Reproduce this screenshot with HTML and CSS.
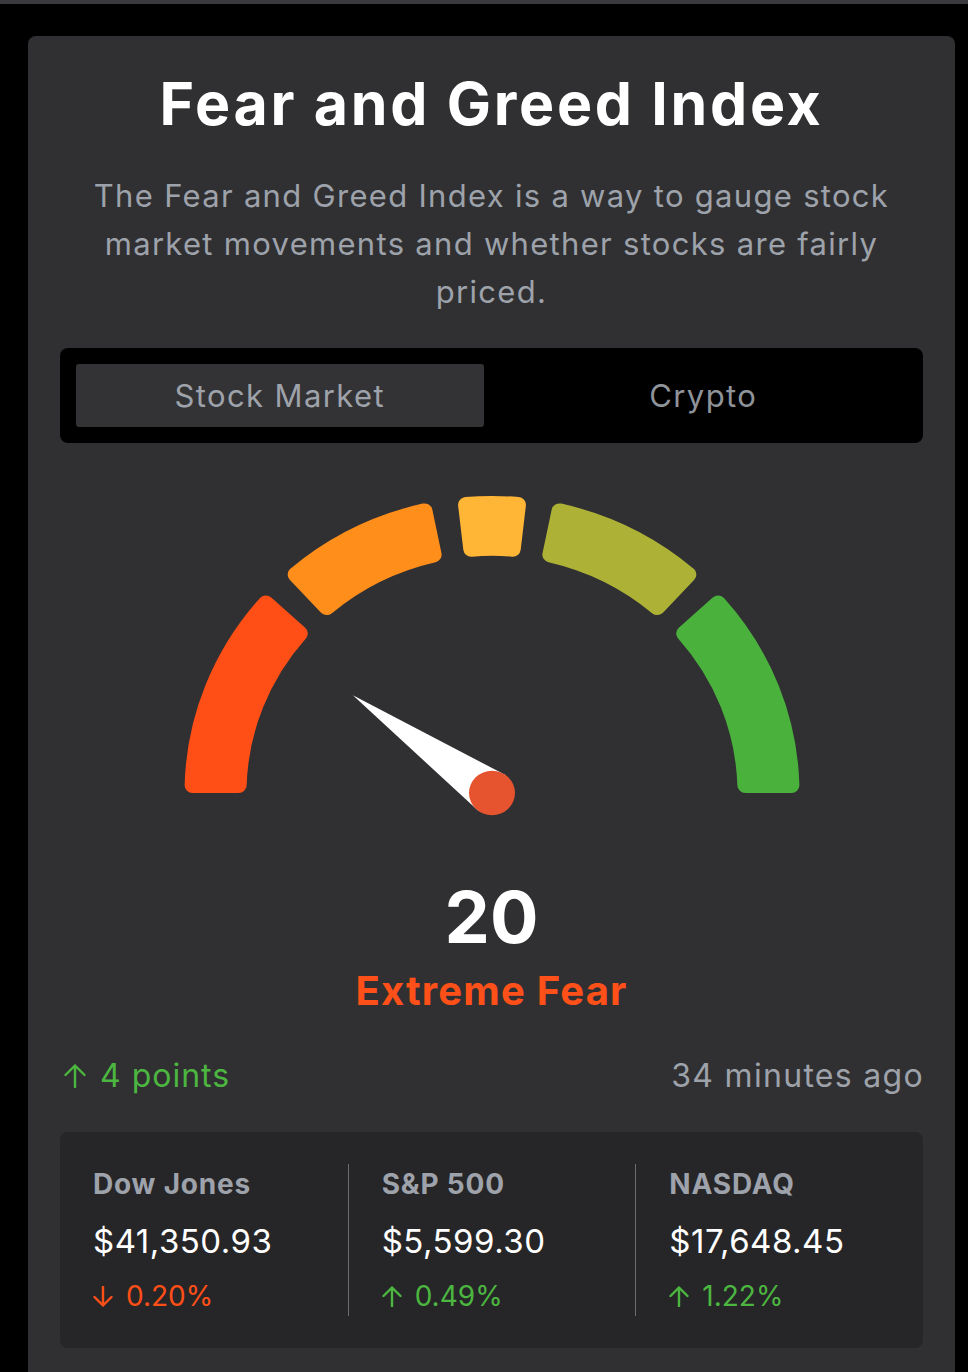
FILE: index.html
```html
<!DOCTYPE html>
<html lang="en">
<head>
<meta charset="utf-8">
<title>Fear and Greed Index</title>
<link rel="stylesheet" href="styles.css">
</head>
<body>
<div class="topbar"></div>
<main class="card">
  <h1 class="title">Fear and Greed Index</h1>
  <p class="desc">The Fear and Greed Index is a way to gauge stock market movements and whether stocks are fairly priced.</p>
  <div class="tabs">
    <div class="tab tab-active">Stock Market</div>
    <div class="tab tab-idle">Crypto</div>
  </div>
  <svg class="gauge" width="640" height="363" viewBox="-320 -333 640 363" xmlns="http://www.w3.org/2000/svg">
    <g transform="scale(1 0.966)" stroke-width="16" stroke-linejoin="round">
      <path fill="#ff4f17" stroke="#ff4f17" d="M -299.39 -8 A 299.5 299.5 0 0 1 -226.14 -196.37 L -192.21 -165.28 A 253.5 253.5 0 0 0 -253.37 -8 Z"/>
      <path fill="#ff8e1b" stroke="#ff8e1b" d="M -196.37 -226.14 A 299.5 299.5 0 0 1 -67.53 -291.79 L -58.35 -246.70 A 253.5 253.5 0 0 0 -165.28 -192.21 Z"/>
      <path fill="#ffb636" stroke="#ffb636" d="M -25.94 -298.37 A 299.5 299.5 0 0 1 25.94 -298.37 L 20.74 -252.65 A 253.5 253.5 0 0 0 -20.74 -252.65 Z"/>
      <path fill="#adb236" stroke="#adb236" d="M 196.37 -226.14 A 299.5 299.5 0 0 0 67.53 -291.79 L 58.35 -246.70 A 253.5 253.5 0 0 1 165.28 -192.21 Z"/>
      <path fill="#4ab13d" stroke="#4ab13d" d="M 299.39 -8 A 299.5 299.5 0 0 0 226.14 -196.37 L 192.21 -165.28 A 253.5 253.5 0 0 1 253.37 -8 Z"/>
      <path fill="#ffffff" stroke="none" d="M -139.1 -101.1 L 13.5 -18.6 L -13.5 18.6 Z"/>
      <circle cx="0" cy="0" r="23" fill="#e5532f"/>
    </g>
  </svg>
  <div class="value">20</div>
  <div class="label">Extreme Fear</div>
  <div class="meta">
    <span class="delta up">
      <svg class="arrow" width="22" height="24" viewBox="0 0 22 24"><path d="M11 23 V1.5 M1.5 11 L11 1.5 L20.5 11"/></svg>
      4 points
    </span>
    <span class="time">34 minutes ago</span>
  </div>
  <div class="stats">
    <div class="stat">
      <div class="name">Dow Jones</div>
      <div class="price">$41,350.93</div>
      <div class="chg down">
        <svg class="arrow" width="20" height="21" viewBox="0 0 20 21"><path d="M10 0.5 V19.5 M1.5 11 L10 19.5 L18.5 11"/></svg>
        0.20%
      </div>
    </div>
    <div class="stat">
      <div class="name">S&amp;P 500</div>
      <div class="price">$5,599.30</div>
      <div class="chg up">
        <svg class="arrow" width="20" height="21" viewBox="0 0 20 21"><path d="M10 20.5 V1.5 M1.5 10 L10 1.5 L18.5 10"/></svg>
        0.49%
      </div>
    </div>
    <div class="stat">
      <div class="name">NASDAQ</div>
      <div class="price">$17,648.45</div>
      <div class="chg up">
        <svg class="arrow" width="20" height="21" viewBox="0 0 20 21"><path d="M10 20.5 V1.5 M1.5 10 L10 1.5 L18.5 10"/></svg>
        1.22%
      </div>
    </div>
  </div>
</main>
</body>
</html>
```
FILE: styles.css
```css
* {
  box-sizing: border-box;
}

html, body {
  margin: 0;
  padding: 0;
  background: #000000;
}

body {
  font-family: Inter, "Noto Sans", "DejaVu Sans", sans-serif;
  color: #ffffff;
  overflow: hidden;
}

.topbar {
  height: 4px;
  background: #3a3a3c;
}

.card {
  margin: 32px 13px 0 28px;
  width: 927px;
  background: #303032;
  border-radius: 8px;
  padding: 32px 32px 40px;
}

.title {
  margin: 0;
  font-size: 59px;
  line-height: 72px;
  font-weight: 700;
  letter-spacing: 2.7px;
  text-align: center;
  color: #ffffff;
}

.desc {
  margin: 32px 0 0;
  font-size: 31px;
  line-height: 48px;
  font-weight: 400;
  letter-spacing: 1.3px;
  text-align: center;
  color: #9da2ab;
}

.tabs {
  margin-top: 32px;
  background: #000000;
  border-radius: 8px;
  padding: 16px;
  display: grid;
  grid-template-columns: 1fr 1fr;
  gap: 16px;
}

.tab {
  height: 63px;
  display: flex;
  align-items: center;
  justify-content: center;
  font-size: 31px;
  letter-spacing: 1.4px;
  color: #9ea2aa;
  border-radius: 3px;
}

.tab-active {
  background: #333335;
}

.tab-idle {
  color: #8f939a;
}

.gauge {
  display: block;
  margin: 17px auto 0;
}

.value {
  margin-top: 58px;
  font-size: 72px;
  line-height: 72px;
  font-weight: 700;
  text-align: center;
  color: #ffffff;
}

.label {
  margin-top: 14px;
  font-size: 40px;
  line-height: 48px;
  font-weight: 700;
  letter-spacing: 1.2px;
  text-align: center;
  color: #ff5019;
}

.meta {
  margin-top: 41px;
  display: flex;
  justify-content: space-between;
  align-items: center;
  font-size: 32px;
  line-height: 40px;
  padding-left: 4px;
}

.delta {
  display: flex;
  align-items: center;
  gap: 14px;
  letter-spacing: 1px;
}

.up {
  color: #4cb640;
}

.down {
  color: #ff4f17;
}

.time {
  color: #9ea2aa;
  letter-spacing: 1.3px;
  margin-right: -1px;
}

.arrow {
  display: block;
  flex: none;
  fill: none;
  stroke: currentColor;
  stroke-width: 2.4;
  stroke-linecap: round;
  stroke-linejoin: round;
}

.stats {
  margin-top: 36px;
  background: #262628;
  border-radius: 8px;
  padding: 32px 0;
  display: grid;
  grid-template-columns: 1fr 1fr 1fr;
}

.stat {
  padding-left: 33px;
}

.stat + .stat {
  border-left: 1px solid #6c6c70;
}

.name {
  font-size: 28px;
  line-height: 40px;
  font-weight: 700;
  letter-spacing: 0.8px;
  color: #9ea2ab;
}

.price {
  margin-top: 15px;
  font-size: 33px;
  line-height: 44px;
  font-weight: 400;
  letter-spacing: 0.5px;
  color: #ffffff;
}

.chg {
  margin-top: 13px;
  font-size: 28px;
  line-height: 40px;
  display: flex;
  align-items: center;
  gap: 13px;
}
```
